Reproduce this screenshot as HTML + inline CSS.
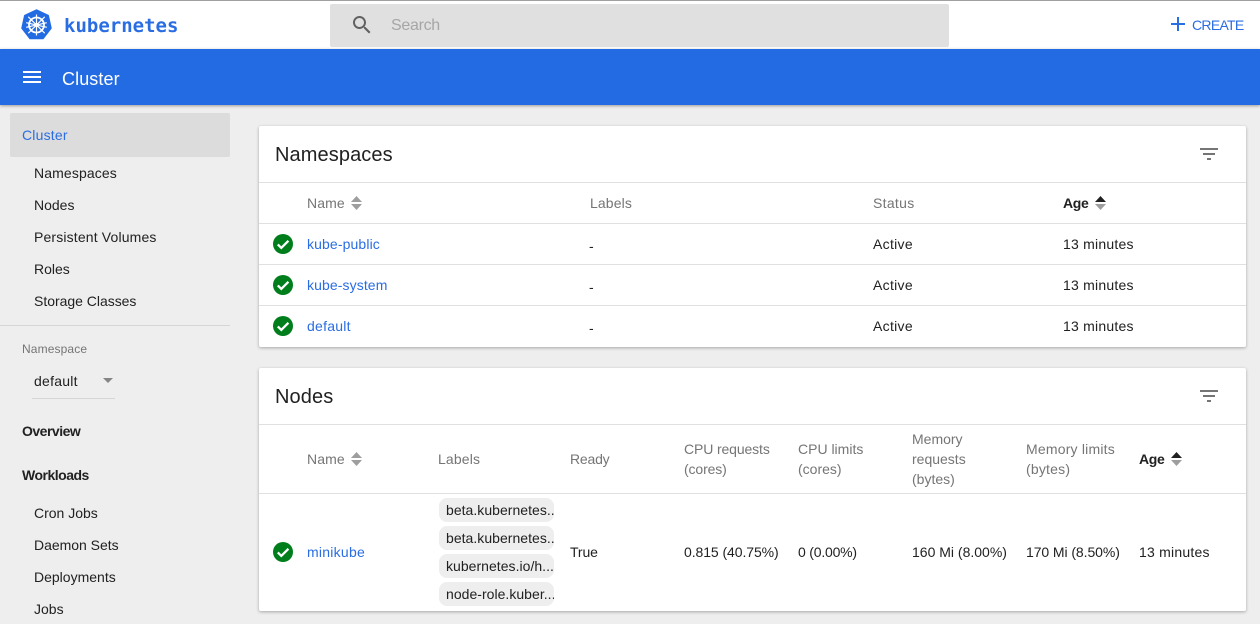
<!DOCTYPE html>
<html><head><meta charset="utf-8"><style>
html,body{margin:0;padding:0;width:1260px;height:624px;overflow:hidden;background:#eee;font-family:"Liberation Sans",sans-serif;color:#212121;font-size:14px}
.t{position:absolute;white-space:nowrap;line-height:20px;font-size:14px;letter-spacing:.12px}
.b{position:absolute}
.l{color:#2a6de3}.g{color:#757575}.m{font-weight:bold;color:#212121}
.a{letter-spacing:.3px}.u{letter-spacing:.22px}
.card{position:absolute;left:259px;width:987px;background:#fff;border-radius:2px;box-shadow:0 1px 3px rgba(0,0,0,.3)}
.ln{position:absolute;left:259px;width:987px;height:1px;background:#e0e0e0}
.chip{position:absolute;left:439px;width:115px;height:24px;background:#eee;border-radius:8px;overflow:hidden}
.chip span{position:absolute;left:7px;top:2px;font-size:14px;line-height:20px;white-space:nowrap;letter-spacing:.03px}
svg{position:absolute;overflow:visible}
</style></head><body>
<div class="b" style="left:0;top:0;width:1260px;height:49px;background:#fff"></div>
<div class="b" style="left:0;top:0;width:1260px;height:1px;background:#a0a0a0"></div>
<svg style="left:21px;top:10px" width="31" height="31" viewBox="0 0 31 31"><path d="M15.5 0 L27.2 5.6 L30 18.2 L22 28.5 L9 28.5 L1 18.2 L3.8 5.6Z" fill="#236be2" stroke="#236be2" stroke-width="1.5" stroke-linejoin="round"/><g fill="none" stroke="#fff"><circle cx="15.5" cy="15" r="7.5" stroke-width="1.8"/><path d="M15.5 4.5V25.5M5.2 12.7L25.8 17.3M7.3 6.8L23.7 23.2M23.7 6.8L7.3 23.2M25.8 12.7L5.2 17.3" stroke-width="1.2"/></g><circle cx="15.5" cy="15" r="2" fill="#fff"/></svg>
<div class="t l" style="left:64px;top:15px;font:bold 19px/22px 'DejaVu Sans Mono',monospace;letter-spacing:0">kubernetes</div>
<div class="b" style="left:330px;top:4px;width:619px;height:43px;background:#e0e0e0;border-radius:2px"></div>
<svg style="left:350px;top:13px" width="24" height="24" viewBox="0 0 24 24"><path fill="#616161" d="M15.5 14h-.79l-.28-.27C15.41 12.59 16 11.11 16 9.5 16 5.91 13.09 3 9.5 3S3 5.91 3 9.5 5.91 16 9.5 16c1.61 0 3.09-.59 4.23-1.57l.27.28v.79l5 4.99L20.49 19l-4.99-5zm-6 0C7.01 14 5 11.99 5 9.5S7.01 5 9.5 5 14 7.01 14 9.5 11.99 14 9.5 14z"/></svg>
<div class="t" style="left:391px;top:16px;font-size:16px;color:#a6a6a6;letter-spacing:-.3px">Search</div>
<svg style="left:1166px;top:12px" width="24" height="24" viewBox="0 0 24 24"><path fill="#2a6de3" d="M19 13h-6v6h-2v-6H5v-2h6V5h2v6h6v2z"/></svg>
<div class="t l" style="left:1192px;top:15px;letter-spacing:-.7px">CREATE</div>

<div class="b" style="left:0;top:49px;width:1260px;height:56px;background:#236be2;box-shadow:0 1px 3px rgba(0,0,0,.35)"></div>
<svg style="left:20px;top:65px" width="24" height="24" viewBox="0 0 24 24"><path fill="#fff" d="M3 18h18v-2H3v2zm0-5h18v-2H3v2zm0-7v2h18V6H3z"/></svg>
<div class="t" style="left:62px;top:68px;font-size:18px;line-height:22px;color:#fff;letter-spacing:.1px">Cluster</div>

<div class="b" style="left:10px;top:113px;width:220px;height:44px;background:#dcdcdc;border-radius:2px"></div>
<div class="t l" style="left:22px;top:125px;letter-spacing:.2px">Cluster</div>
<div class="t" style="left:34px;top:163px">Namespaces</div>
<div class="t" style="left:34px;top:195px;letter-spacing:0">Nodes</div>
<div class="t" style="left:34px;top:227px;letter-spacing:.15px">Persistent Volumes</div>
<div class="t" style="left:34px;top:259px;letter-spacing:0">Roles</div>
<div class="t" style="left:34px;top:291px;letter-spacing:-.02px">Storage Classes</div>
<div class="b" style="left:0;top:325px;width:230px;height:1px;background:#d6d6d6"></div>
<div class="t g" style="left:22px;top:339px;font-size:12px">Namespace</div>
<div class="t" style="left:34px;top:371px;letter-spacing:.25px">default</div>
<div class="b" style="left:103px;top:378px;border-left:5.5px solid transparent;border-right:5.5px solid transparent;border-top:5px solid #858585"></div>
<div class="b" style="left:32px;top:398px;width:83px;height:1px;background:#d6d6d6"></div>
<div class="t" style="left:22px;top:421px;font-weight:bold;letter-spacing:-.5px">Overview</div>
<div class="t" style="left:22px;top:465px;font-weight:bold;letter-spacing:-.5px">Workloads</div>
<div class="t" style="left:34px;top:503px;letter-spacing:0">Cron Jobs</div>
<div class="t" style="left:34px;top:535px;letter-spacing:-.02px">Daemon Sets</div>
<div class="t" style="left:34px;top:567px;letter-spacing:0">Deployments</div>
<div class="t" style="left:34px;top:599px;letter-spacing:0">Jobs</div>

<div class="card" style="top:126px;height:221px"></div>
<div class="t" style="left:275px;top:144px;font-size:20px;line-height:22px;letter-spacing:.1px">Namespaces</div>
<svg style="left:1197px;top:142px" width="24" height="24" viewBox="0 0 24 24"><path fill="#757575" d="M10 18h4v-2h-4v2zM3 6v2h18V6H3zm3 7h12v-2H6v2z"/></svg>
<div class="ln" style="top:182px"></div><div class="ln" style="top:223px"></div><div class="ln" style="top:264px"></div><div class="ln" style="top:305px"></div>
<div class="t g" style="left:307px;top:193px">Name</div>
<svg style="left:351px;top:196px" width="11" height="14"><path d="M0 6L5.5 0L11 6Z M0 8L5.5 14L11 8Z" fill="#9e9e9e"/></svg>
<div class="t g" style="left:590px;top:193px">Labels</div>
<div class="t g a" style="left:873px;top:193px">Status</div>
<div class="t m" style="left:1063px;top:193px;letter-spacing:-.3px">Age</div>
<svg style="left:1095px;top:196px" width="11" height="14"><path d="M0 6L5.5 0L11 6Z" fill="#212121"/><path d="M0 8L5.5 14L11 8Z" fill="#9e9e9e"/></svg>

<svg style="left:273px;top:234px" width="20" height="20" viewBox="0 0 20 20"><circle cx="10" cy="10" r="10" fill="#007e1c"/><path d="M4.8 10.4L8.3 13.9L15.4 6.8" fill="none" stroke="#fff" stroke-width="2.3"/></svg>
<div class="t l" style="left:307px;top:234px">kube-public</div>
<div class="t" style="left:590px;top:236px;letter-spacing:0;margin-left:-1px">-</div><div class="t a" style="left:873px;top:234px">Active</div><div class="t u" style="left:1063px;top:234px">13 minutes</div>
<svg style="left:273px;top:275px" width="20" height="20" viewBox="0 0 20 20"><circle cx="10" cy="10" r="10" fill="#007e1c"/><path d="M4.8 10.4L8.3 13.9L15.4 6.8" fill="none" stroke="#fff" stroke-width="2.3"/></svg>
<div class="t l" style="left:307px;top:275px;letter-spacing:.1px">kube-system</div>
<div class="t" style="left:590px;top:277px;letter-spacing:0;margin-left:-1px">-</div><div class="t a" style="left:873px;top:275px">Active</div><div class="t u" style="left:1063px;top:275px">13 minutes</div>
<svg style="left:273px;top:316px" width="20" height="20" viewBox="0 0 20 20"><circle cx="10" cy="10" r="10" fill="#007e1c"/><path d="M4.8 10.4L8.3 13.9L15.4 6.8" fill="none" stroke="#fff" stroke-width="2.3"/></svg>
<div class="t l" style="left:307px;top:316px;letter-spacing:.25px">default</div>
<div class="t" style="left:590px;top:318px;letter-spacing:0;margin-left:-1px">-</div><div class="t a" style="left:873px;top:316px">Active</div><div class="t u" style="left:1063px;top:316px">13 minutes</div>

<div class="card" style="top:368px;height:243px"></div>
<div class="t" style="left:275px;top:386px;font-size:20px;line-height:22px;letter-spacing:.1px">Nodes</div>
<svg style="left:1197px;top:384px" width="24" height="24" viewBox="0 0 24 24"><path fill="#757575" d="M10 18h4v-2h-4v2zM3 6v2h18V6H3zm3 7h12v-2H6v2z"/></svg>
<div class="ln" style="top:424px"></div><div class="ln" style="top:493px"></div>
<div class="t g" style="left:307px;top:449px">Name</div>
<svg style="left:351px;top:452px" width="11" height="14"><path d="M0 6L5.5 0L11 6Z M0 8L5.5 14L11 8Z" fill="#9e9e9e"/></svg>
<div class="t g" style="left:438px;top:449px;letter-spacing:.15px">Labels</div>
<div class="t g" style="left:570px;top:449px;letter-spacing:-.2px">Ready</div>
<div class="t g" style="left:684px;top:439px;letter-spacing:-.12px">CPU requests<br>(cores)</div>
<div class="t g" style="left:798px;top:439px;letter-spacing:0">CPU limits<br>(cores)</div>
<div class="t g" style="left:912px;top:429px;letter-spacing:0">Memory<br>requests<br>(bytes)</div>
<div class="t g" style="left:1026px;top:439px;letter-spacing:.2px">Memory limits<br>(bytes)</div>
<div class="t m" style="left:1139px;top:449px;letter-spacing:-.3px">Age</div>
<svg style="left:1171px;top:452px" width="11" height="14"><path d="M0 6L5.5 0L11 6Z" fill="#212121"/><path d="M0 8L5.5 14L11 8Z" fill="#9e9e9e"/></svg>

<svg style="left:273px;top:542px" width="20" height="20" viewBox="0 0 20 20"><circle cx="10" cy="10" r="10" fill="#007e1c"/><path d="M4.8 10.4L8.3 13.9L15.4 6.8" fill="none" stroke="#fff" stroke-width="2.3"/></svg>
<div class="t l" style="left:307px;top:542px;letter-spacing:.25px">minikube</div>
<div class="chip" style="top:498px"><span>beta.kubernetes..</span></div>
<div class="chip" style="top:526px"><span>beta.kubernetes..</span></div>
<div class="chip" style="top:554px"><span>kubernetes.io/h...</span></div>
<div class="chip" style="top:582px"><span>node-role.kuber...</span></div>
<div class="t" style="left:570px;top:542px;letter-spacing:-.1px">True</div>
<div class="t" style="left:684px;top:542px;letter-spacing:-.08px">0.815 (40.75%)</div>
<div class="t" style="left:798px;top:542px;letter-spacing:-.2px">0 (0.00%)</div>
<div class="t" style="left:912px;top:542px;letter-spacing:0">160 Mi (8.00%)</div>
<div class="t" style="left:1026px;top:542px;letter-spacing:-.08px">170 Mi (8.50%)</div>
<div class="t u" style="left:1139px;top:542px">13 minutes</div>
</body></html>
